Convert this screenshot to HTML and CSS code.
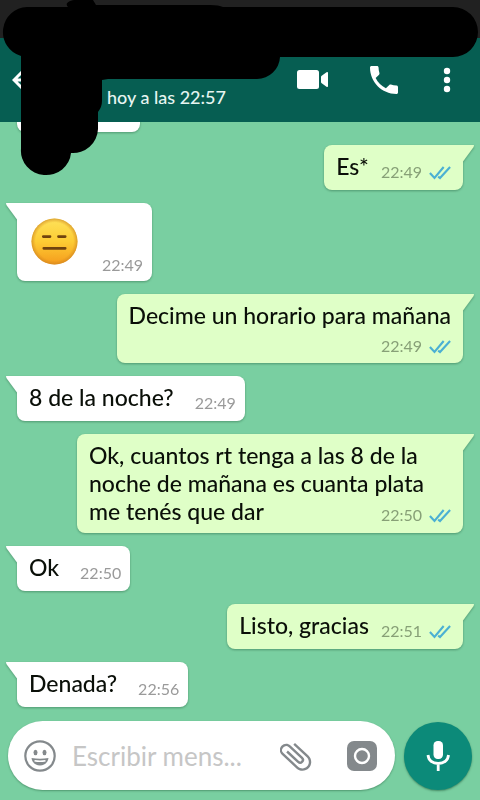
FILE: index.html
```html
<!DOCTYPE html>
<html lang="es">
<head>
<meta charset="utf-8">
<meta name="viewport" content="width=device-width, initial-scale=1">
<title>Chat</title>
<link rel="stylesheet" href="styles.css">
</head>
<body>
<svg class="defs" aria-hidden="true">
  <symbol id="ticks" viewBox="0 0 24 16">
    <path d="M1 8.500l5 5.500L16 2M10 12.500l2 1.500L23 2" fill="none" stroke="#4bb0d3" stroke-width="2.300"/>
  </symbol>
</svg>
<div class="statusbar"></div>
<header class="topbar">
  <button class="icon-btn back" aria-label="Volver">
    <svg width="24" height="20" viewBox="0 0 24 20"><path d="M10 2L2 10l8 8M2 10h21" fill="none" stroke="#fff" stroke-width="3"/></svg>
  </button>
  <p class="seen">hoy a las 22:57</p>
  <nav class="actions">
    <button class="icon-btn" aria-label="Videollamada">
      <svg width="32" height="20" viewBox="0 0 32 20" fill="#fff"><rect width="22" height="19" rx="2.500"/><path d="M24 7q0-.8.700-1.300L29.500 2.200Q31 1.500 31 3v13q0 1.500-1.500.8L24.700 13.300Q24 12.800 24 12z"/></svg>
    </button>
    <button class="icon-btn" aria-label="Llamar">
      <svg width="28" height="28" viewBox="3 3 18 18" fill="#fff"><path d="M6.620 10.790c1.440 2.830 3.760 5.140 6.590 6.590l2.200-2.200c.27-.27.67-.36 1.020-.24 1.120.37 2.330.57 3.570.57.55 0 1 .45 1 1V20c0 .55-.45 1-1 1C10.610 21 3 13.390 3 4c0-.55.45-1 1-1h3.500c.55 0 1 .45 1 1 0 1.250.2 2.450.57 3.570.11.35.03.74-.25 1.020z"/></svg>
    </button>
    <button class="icon-btn" aria-label="Más opciones">
      <svg width="16" height="26" viewBox="0 0 16 26" fill="#fff"><circle cx="8" cy="4" r="3.200"/><circle cx="8" cy="13" r="3.200"/><circle cx="8" cy="22" r="3.200"/></svg>
    </button>
  </nav>
</header>
<main class="chat">
  <article class="msg in plain"></article>
  <article class="msg out"><p>Es*</p><span class="meta"><time>22:49</time><svg class="ticks"><use href="#ticks"/></svg></span></article>
  <article class="msg in sticker">
    <svg class="emoji" role="img" aria-label="Cara inexpresiva" viewBox="0 0 48 48">
      <defs>
        <linearGradient id="skin" x1="0" y1="0" x2="0" y2="1"><stop offset="0" stop-color="#fee25a"/><stop offset=".5" stop-color="#fdcc34"/><stop offset="1" stop-color="#f59b1c"/></linearGradient>
        <radialGradient id="rim"><stop offset=".82" stop-color="#d98a1c" stop-opacity="0"/><stop offset="1" stop-color="#c98222" stop-opacity=".65"/></radialGradient>
      </defs>
      <circle cx="24" cy="24" r="23.500" fill="url(#skin)"/><circle cx="24" cy="24" r="23.500" fill="url(#rim)"/>
      <path d="M12.500 19h7M28 19h7M13 31h22" stroke="#70430e" stroke-width="2.600" stroke-linecap="round"/>
    </svg>
    <span class="meta"><time>22:49</time></span>
  </article>
  <article class="msg out stacked"><p>Decime un horario para mañana</p><span class="meta"><time>22:49</time><svg class="ticks"><use href="#ticks"/></svg></span></article>
  <article class="msg in"><p>8 de la noche?</p><span class="meta"><time>22:49</time></span></article>
  <article class="msg out long"><p>Ok, cuantos rt tenga a las 8 de la<br>noche de mañana es cuanta plata<br>me tenés que dar</p><span class="meta"><time>22:50</time><svg class="ticks"><use href="#ticks"/></svg></span></article>
  <article class="msg in"><p>Ok</p><span class="meta"><time>22:50</time></span></article>
  <article class="msg out"><p>Listo, gracias</p><span class="meta"><time>22:51</time><svg class="ticks"><use href="#ticks"/></svg></span></article>
  <article class="msg in"><p>Denada?</p><span class="meta"><time>22:56</time></span></article>
</main>
<footer class="composer">
  <div class="field">
    <button class="icon-btn" aria-label="Emojis">
      <svg width="32" height="32" viewBox="0 0 32 32"><circle cx="16" cy="16" r="14.700" fill="none" stroke="#84898c" stroke-width="2.200"/><ellipse cx="11.500" cy="12.500" rx="2" ry="2.700" fill="#84898c"/><ellipse cx="20.500" cy="12.500" rx="2" ry="2.700" fill="#84898c"/><path d="M7.500 18q8.500 1.500 17 0c-.5 4.500-4 7.500-8.500 7.500S8 22.500 7.500 18z" fill="#84898c"/><path d="M10.500 20.800q5.500 1 11 0" fill="none" stroke="#fff" stroke-width="1.500"/></svg>
    </button>
    <input class="text" type="text" aria-label="Mensaje" placeholder="Escribir mens...">
    <button class="icon-btn" aria-label="Adjuntar">
      <svg width="32" height="32" viewBox="2 2 20 20"><path transform="rotate(-47 12 12) translate(-.5 0)" fill="#84898c" d="M16.500 6v11.500c0 2.210-1.790 4-4 4s-4-1.790-4-4V5a2.500 2.500 0 0 1 5 0v10.500c0 .55-.45 1-1 1s-1-.45-1-1V6H10v9.500a2.500 2.500 0 0 0 5 0V5c0-2.210-1.790-4-4-4S7 2.790 7 5v12.500c0 3.040 2.460 5.500 5.500 5.500s5.500-2.460 5.500-5.500V6z"/></svg>
    </button>
    <button class="icon-btn camera" aria-label="Cámara">
      <svg width="30" height="30" viewBox="0 0 30 30"><rect width="30" height="30" rx="7" fill="#84898c"/><circle cx="15" cy="15" r="7" fill="none" stroke="#fff" stroke-width="2.400"/></svg>
    </button>
  </div>
  <button class="mic" aria-label="Grabar audio">
    <svg width="24" height="30" viewBox="0 0 24 30"><rect x="7.500" y="0" width="9.500" height="18" rx="4.200" fill="#fff"/><path d="M2 14c.5 5.500 4.800 8.500 10.200 8.500S22 19.500 22.500 14M12.200 22.500V30" fill="none" stroke="#fff" stroke-width="2.800"/></svg>
  </button>
</footer>
<svg class="scribble" aria-hidden="true" width="480" height="180" viewBox="0 0 480 180">
  <path d="M27 7H68C64 3 70 0 76 0H93L96 5H210Q219 5 223 7H453A25 25 0 0 1 453 57H280A23 23 0 0 1 257 79H108L102 80V101Q102 107 98 112V129A25 25 0 0 1 71 153A25 24 0 0 1 21 149V56A25 25 0 0 1 27 7Z"/>
</svg>
</body>
</html>
```
FILE: styles.css
```css
* { box-sizing: border-box; }
body {
  margin: 0;
  height: 100vh;
  display: flex;
  flex-direction: column;
  overflow: hidden;
  position: relative;
  background: #79cfa1;
  font-family: Lato, "Open Sans", sans-serif;
  color: #0a0f08;
}
p { margin: 0; }
button { border: 0; padding: 0; background: none; }
svg { display: block; flex: none; }
.defs { position: absolute; width: 0; height: 0; }
.statusbar { flex: none; height: 38px; background: #212121; }
.topbar {
  flex: none;
  height: 84px;
  padding: 0 25px 0 12px;
  display: flex;
  align-items: center;
  background: #065e52;
  color: #e6f5f1;
}
.icon-btn { flex: none; display: flex; }
.seen { margin: 34px 0 0 71px; font-size: 18px; font-weight: 500; line-height: 24px; white-space: nowrap; }
.actions { margin-left: auto; display: flex; align-items: center; gap: 41px; }
.chat {
  flex: 1;
  min-height: 0;
  overflow: hidden;
  padding: 0 17px 14px;
  display: flex;
  flex-direction: column;
  justify-content: flex-end;
  gap: 13px;
}
.msg {
  position: relative;
  flex: none;
  display: flex;
  align-items: flex-end;
  justify-content: space-between;
  gap: 12px;
  min-height: 45px;
  max-width: 90%;
  padding: 7px 12px 8px;
  border-radius: 8px;
  font-size: 23px;
  line-height: 28px;
  filter: drop-shadow(0 1px 1px rgba(20, 70, 40, .4));
}
.msg p { align-self: flex-start; font-weight: 500; white-space: nowrap; }
.in { align-self: flex-start; gap: 21px; padding-right: 9px; background: #fff; border-top-left-radius: 0; }
.out { align-self: flex-end; background: #dfffc7; border-top-right-radius: 0; }
.msg::before { content: ""; position: absolute; top: 0; width: 12px; height: 17px; }
.in::before { left: -11px; background: #fff; clip-path: polygon(0 0, 100% 0, 100% 100%, 90% 95%, 3% 12%); }
.out::before { right: -11px; background: #dfffc7; clip-path: polygon(0 0, 100% 0, 97% 12%, 10% 95%, 0 100%); }
.plain { width: 123px; }
.meta { display: flex; align-items: center; gap: 7px; font-size: 16px; line-height: 20px; color: #9a9a9a; }
.out .meta { color: #87a077; }
.ticks { width: 22px; height: 15px; }
.sticker { padding: 15px 9px 6px 14px; gap: 24px; }
.sticker .emoji { width: 47px; height: 47px; margin-bottom: 10px; }
.stacked { flex-direction: column; gap: 0; padding-bottom: 7px; }
.stacked .meta { padding-top: 7px; }
.long { width: 386px; }
.long .meta { margin-left: -140px; }
.composer { flex: none; display: flex; align-items: center; gap: 9px; padding: 0 8px 10px; }
.field {
  flex: 1;
  min-width: 0;
  height: 69px;
  display: flex;
  align-items: center;
  padding: 0 18px 0 16px;
  border-radius: 35px;
  background: #fff;
  box-shadow: 0 1px 2px rgba(20, 70, 40, .4);
}
.text {
  flex: 1;
  min-width: 0;
  margin: 0 16px;
  padding: 0;
  border: 0;
  outline: 0;
  background: none;
  font: inherit;
  font-size: 26px;
}
.text::placeholder { color: #c6c6c6; opacity: 1; }
.camera { margin-left: 35px; }
.mic {
  flex: none;
  width: 68px;
  height: 68px;
  display: flex;
  align-items: center;
  justify-content: center;
  border-radius: 50%;
  background: #0c8a79;
  box-shadow: 0 1px 2px rgba(20, 70, 40, .5);
}
.scribble { position: absolute; top: 0; left: 0; fill: #000; pointer-events: none; }
```
